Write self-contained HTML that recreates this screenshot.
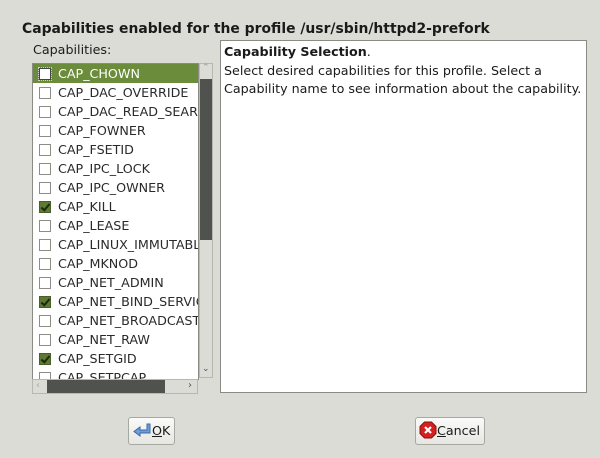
<!DOCTYPE html>
<html><head><style>
body{margin:0;width:600px;height:458px;background:#dcdcd6;font-family:"DejaVu Sans","Liberation Sans",sans-serif;font-size:12.7px;color:#1a1a1a;position:relative;overflow:hidden}
.a{position:absolute}
.title{left:22px;top:21px;font-weight:bold;font-size:13.9px;white-space:nowrap}
.list{left:32px;top:63px;width:165px;height:315px;background:#fff;border:1px solid #8b8b85;overflow:hidden}
.row{height:19px;line-height:19px;position:relative;white-space:nowrap;padding-left:25px;color:#2a2a2a}
.row .cb{position:absolute;left:6px;top:4px;width:10px;height:10px;border:1px solid #8d8d88;background:#fff}
.row.on .cb{background:#5d7a34;border-color:#4a5e2a}
.row.on .cb:after{content:"";position:absolute;left:3px;top:0px;width:3px;height:7px;border:solid #1a2a0a;border-width:0 2px 2px 0;transform:rotate(40deg)}
.row.sel{background:#6b8c3a;color:#fff}
.row.sel .cb{border-color:#444;}
.vs{left:199px;top:63px;width:14px;height:315px;background:#dcdcd6;border:1px solid #b8b8b2;box-sizing:border-box}
.thumb{left:200px;top:79px;width:12px;height:161px;background:#50524e}
.hs{left:32px;top:379px;width:166px;height:15px;background:#dcdcd6;border:1px solid #b8b8b2;box-sizing:border-box}
.hthumb{left:47px;top:380px;width:118px;height:13px;background:#50524e}
.panel{left:220px;top:40px;width:367px;height:353px;background:#fff;border:1px solid #8b8b85;padding:1px 3px;box-sizing:border-box;line-height:18px;white-space:nowrap;overflow:hidden}
.btn{background:linear-gradient(#fafaf8,#e6e6e2);border:1px solid #a8a8a2;border-radius:3px;box-sizing:border-box;line-height:26px}
</style></head><body>
<div class="a title">Capabilities enabled for the profile /usr/sbin/httpd2-prefork</div>
<div class="a" style="left:33px;top:42px">Capabilities:</div>
<div class="a list">
<div class="row sel"><span class="cb" style="outline:1px dotted #ccc"></span>CAP_CHOWN</div>
<div class="row"><span class="cb"></span>CAP_DAC_OVERRIDE</div>
<div class="row"><span class="cb"></span>CAP_DAC_READ_SEARCH</div>
<div class="row"><span class="cb"></span>CAP_FOWNER</div>
<div class="row"><span class="cb"></span>CAP_FSETID</div>
<div class="row"><span class="cb"></span>CAP_IPC_LOCK</div>
<div class="row"><span class="cb"></span>CAP_IPC_OWNER</div>
<div class="row on"><span class="cb"></span>CAP_KILL</div>
<div class="row"><span class="cb"></span>CAP_LEASE</div>
<div class="row"><span class="cb"></span>CAP_LINUX_IMMUTABLE</div>
<div class="row"><span class="cb"></span>CAP_MKNOD</div>
<div class="row"><span class="cb"></span>CAP_NET_ADMIN</div>
<div class="row on"><span class="cb"></span>CAP_NET_BIND_SERVICE</div>
<div class="row"><span class="cb"></span>CAP_NET_BROADCAST</div>
<div class="row"><span class="cb"></span>CAP_NET_RAW</div>
<div class="row on"><span class="cb"></span>CAP_SETGID</div>
<div class="row"><span class="cb"></span>CAP_SETPCAP</div>
</div>
<div class="a vs"></div>
<div class="a thumb"></div>
<div class="a" style="left:202px;top:63px;font-size:9px;color:#999">&#8963;</div>
<div class="a" style="left:202px;top:364px;font-size:9px;color:#555">&#8964;</div>
<div class="a hs"></div>
<div class="a hthumb"></div>
<div class="a" style="left:36px;top:380px;font-size:10px;color:#aaa">&lsaquo;</div>
<div class="a" style="left:188px;top:380px;font-size:10px;color:#555">&rsaquo;</div>
<div class="a panel"><div style="line-height:20px"><b>Capability Selection</b>.</div>Select desired capabilities for this profile. Select a<br>Capability name to see information about the capability.</div>
<div class="a btn" style="left:128px;top:417px;width:47px;height:28px;padding-left:4px">
<svg width="19" height="16" style="vertical-align:-3px" viewBox="0 0 19 16"><path d="M14 2v6H7V5L1 9.5 7 14v-3h10V2z" fill="#6f9ed6" stroke="#3a6aa8" stroke-width="1"/></svg><u>O</u>K</div>
<div class="a btn" style="left:415px;top:417px;width:70px;height:28px;padding-left:3px">
<svg width="18" height="18" style="vertical-align:-4px" viewBox="0 0 18 18"><polygon points="5.5,1 12.5,1 17,5.5 17,12.5 12.5,17 5.5,17 1,12.5 1,5.5" fill="#d42020" stroke="#8a1010"/><path d="M6 6l6 6M12 6l-6 6" stroke="#fff" stroke-width="2.2"/></svg><u>C</u>ancel</div>
</body></html>
